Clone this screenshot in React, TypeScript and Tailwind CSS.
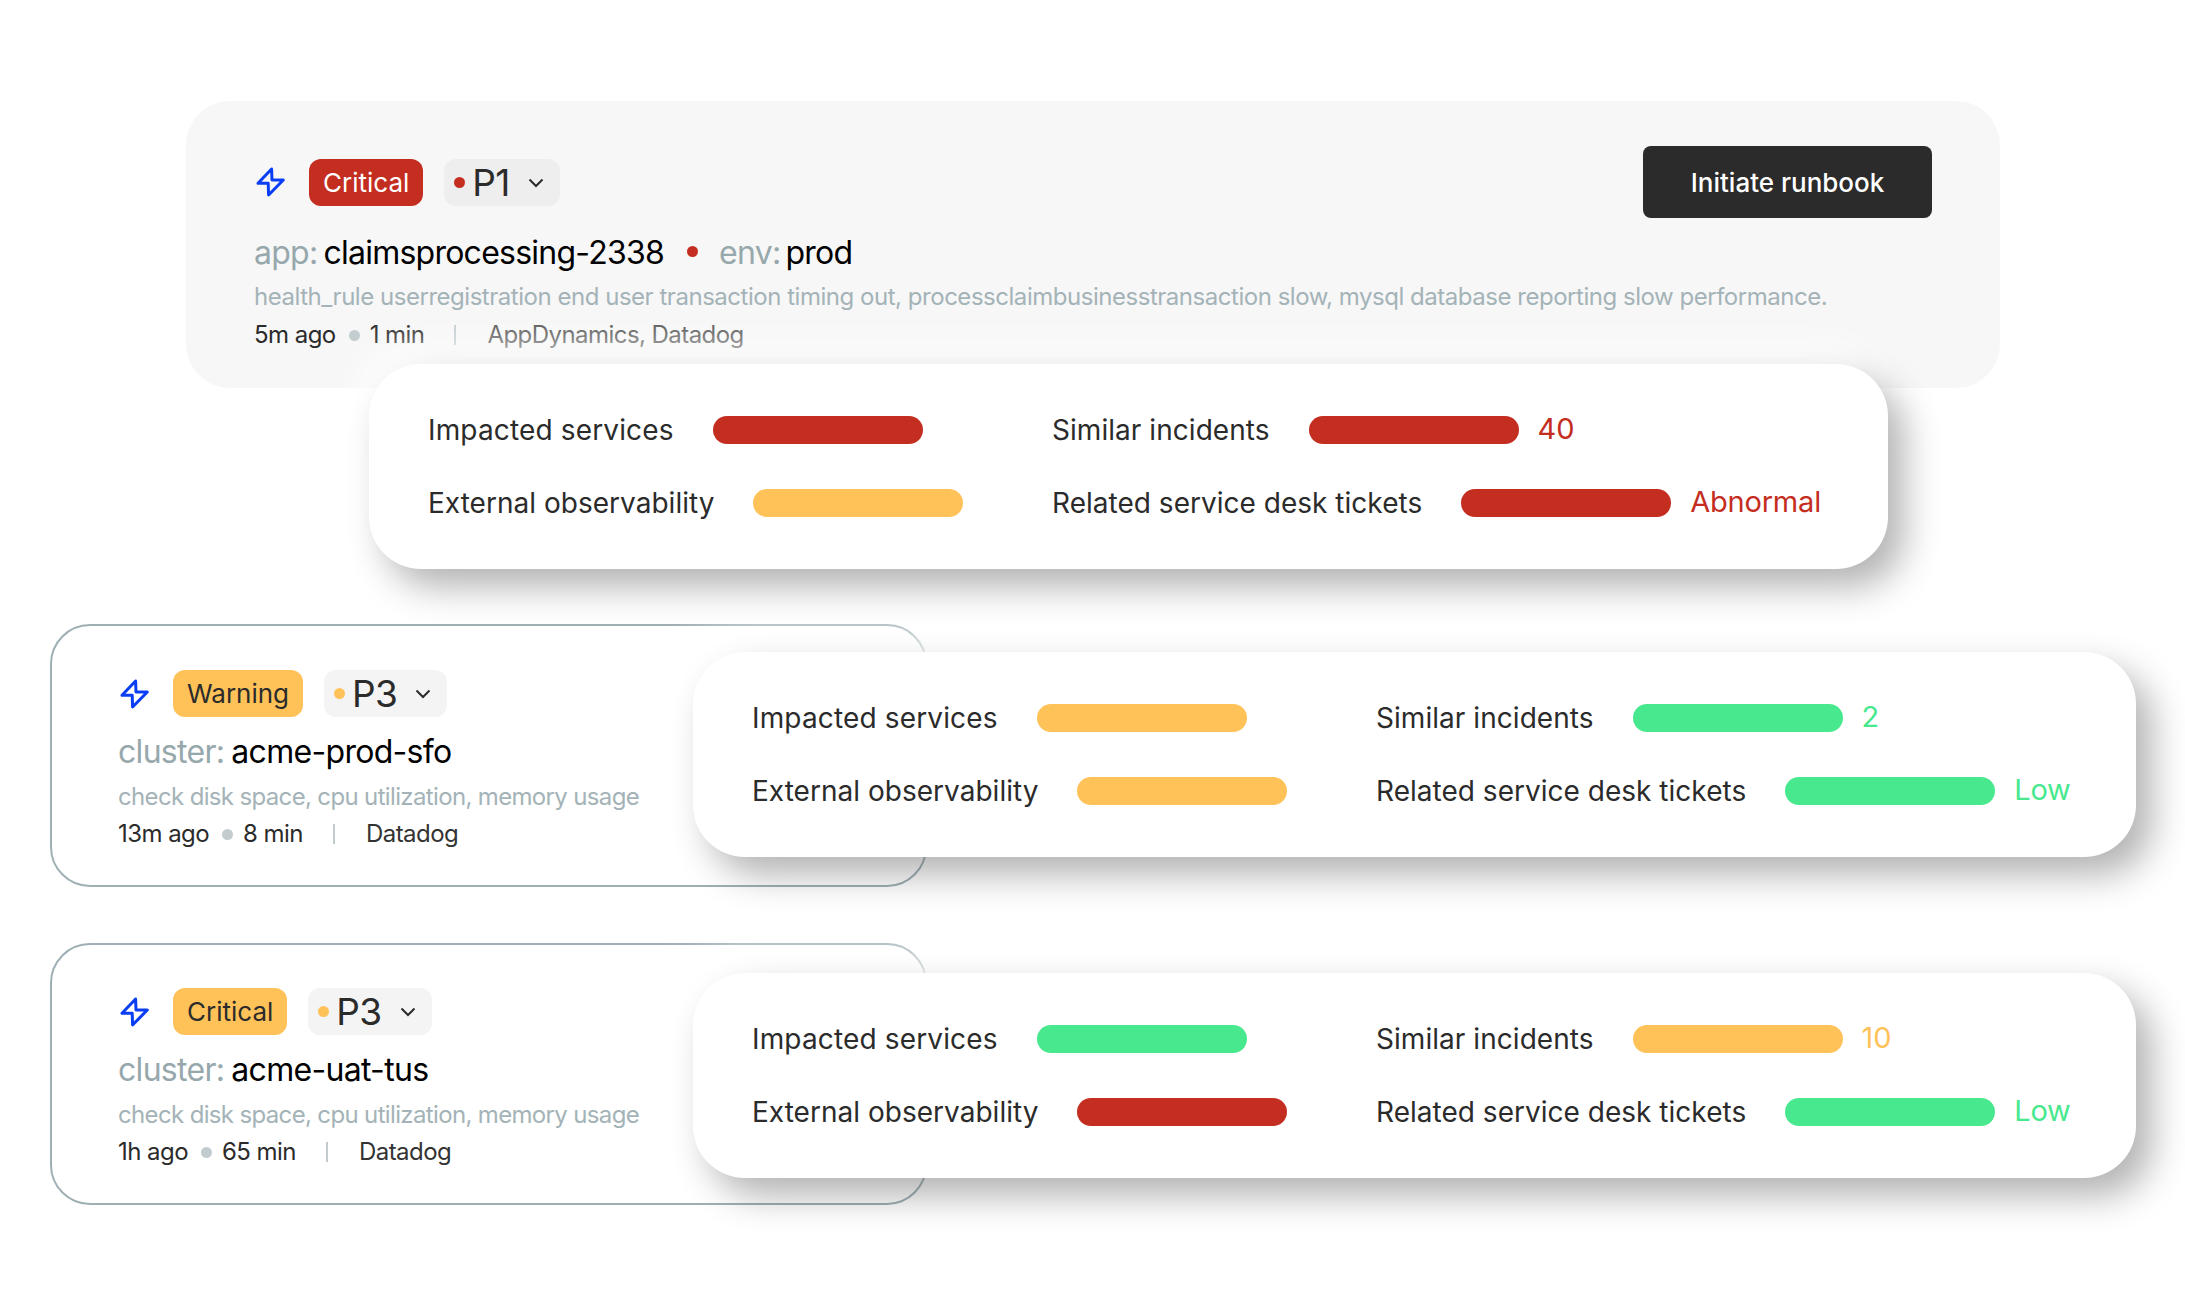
const RED = "bg-[#c42e21]";
const AMBER = "bg-[#ffc259]";
const GREEN = "bg-[#48e88e]";

function Bolt({ cls }: { cls: string }) {
  return (
    <svg viewBox="0 0 32 32" className={cls} fill="none" stroke="#0a3ef5" strokeWidth="3" strokeLinejoin="round">
      <path d="M17.6 3 4 17.3H14.2L14.6 29 29.3 14H18Z" />
    </svg>
  );
}

function Chevron({ cls }: { cls: string }) {
  return (
    <svg viewBox="0 0 16 10" className={cls} fill="none" stroke="#2b2b2b" strokeWidth="2">
      <path d="M1.5 1.5 8 8l6.5-6.5" />
    </svg>
  );
}

function Bar({ color }: { color: string }) {
  return <div className={`h-[28px] w-[210px] shrink-0 rounded-full ${color}`} />;
}

function Stat({
  label,
  labelCls,
  color,
  extra,
  extraColor,
}: {
  label: string;
  labelCls: string;
  color: string;
  extra?: string;
  extraColor?: string;
}) {
  return (
    <div className="flex h-[28px] items-center gap-[39px] whitespace-nowrap">
      <span className={`text-[28px] text-[#2b2b2b] ${labelCls}`}>{label}</span>
      <div className="flex items-center gap-[19px]">
        <Bar color={color} />
        {extra && <span className={`-mt-[2px] text-[29px] tracking-[-0.2px] ${extraColor}`}>{extra}</span>}
      </div>
    </div>
  );
}

function Panel({
  cls,
  a,
  b,
  c,
  d,
  extra1,
  extra2,
  extraColor,
  extra1Color,
}: {
  cls: string;
  a: string;
  b: string;
  c: string;
  d: string;
  extra1: string;
  extra2: string;
  extraColor: string;
  extra1Color: string;
}) {
  return (
    <div
      className={`relative z-10 grid h-[205px] grid-cols-[624px_auto] content-start gap-y-[45px] rounded-[52px] bg-white pl-[59px] pr-[60px] pt-[52px] shadow-[16px_18px_36px_rgba(0,0,0,0.3),-10px_-16px_40px_rgba(255,255,255,0.9)] ${cls}`}
    >
      <Stat label="Impacted services" labelCls="tracking-[0.15px]" color={a} />
      <Stat label="Similar incidents" labelCls="tracking-[0.05px]" color={b} extra={extra1} extraColor={extra1Color} />
      <Stat label="External observability" labelCls="tracking-[0.02px]" color={c} />
      <Stat label="Related service desk tickets" labelCls="tracking-[0.02px]" color={d} extra={extra2} extraColor={extraColor} />
    </div>
  );
}

function Header({
  badge,
  badgeCls,
  dot,
  pri,
  tileCls,
}: {
  badge: string;
  badgeCls: string;
  dot: string;
  pri: string;
  tileCls: string;
}) {
  return (
    <div className="flex items-center">
      <Bolt cls="mr-[23px] h-[32px] w-[32px]" />
      <span className={`flex h-[47px] items-center rounded-[12px] px-[14px] text-[26px] ${badgeCls}`}>{badge}</span>
      <span className={`ml-[21px] flex h-[47px] items-center rounded-[12px] pl-[10px] pr-[16px] ${tileCls}`}>
        <span className={`h-[11px] w-[11px] rounded-full ${dot}`} />
        <span className="ml-[7px] text-[37px] leading-none tracking-[-0.6px] text-[#2b2b2b]">{pri}</span>
        <Chevron cls="ml-[18px] mt-[1px] h-[10px] w-[16px]" />
      </span>
    </div>
  );
}

function Meta({ ago, dur, src, srcCls }: { ago: string; dur: string; src: string; srcCls: string }) {
  return (
    <div className="flex items-center whitespace-nowrap text-[24px] leading-[30px] tracking-[-0.55px] text-[#2b2b2b]">
      <span>{ago}</span>
      <span className="ml-[13px] mr-[10px] h-[11px] w-[11px] rounded-full bg-[#c2cccf]" />
      <span className="mr-[30px]">{dur}</span>
      <span className="h-[20px] w-[2px] bg-[#c2cccf]" />
      <span className={`ml-[31px] ${srcCls}`}>{src}</span>
    </div>
  );
}

function SmallCard({
  cluster,
  badge,
  ago,
  dur,
  cls,
}: {
  cluster: string;
  badge: string;
  ago: string;
  dur: string;
  cls: string;
}) {
  return (
    <div className={`w-[877px] shrink-0 rounded-[40px] border-2 border-[#9fb0b5] bg-white pl-[66px] ${cls}`}>
      <Header badge={badge} badgeCls="bg-[#ffc259] text-[#2b2b2b]" dot="bg-[#ffc259]" pri="P3" tileCls="bg-[#f4f4f4]" />
      <div className="mt-[15px] flex whitespace-nowrap text-[32px] leading-[40px] tracking-[-0.7px] text-black">
        <span className="mr-[7px] text-[#97a8ac]">cluster:</span>
        {cluster}
      </div>
      <div className="mt-[10px] whitespace-nowrap text-[24px] leading-[30px] tracking-[-0.65px] text-[#a4b3b7]">
        check disk space, cpu utilization, memory usage
      </div>
      <div className="mt-[7px]">
        <Meta ago={ago} dur={dur} src="Datadog" srcCls="text-[#333333]" />
      </div>
    </div>
  );
}

export default function App() {
  return (
    <div className="h-[1301px] w-[2185px] overflow-hidden bg-white font-['Inter',sans-serif] pt-[101px]">
      <div className="ml-[186px]">
        <div className="h-[287px] w-[1814px] rounded-[44px] bg-[#f7f7f7] pl-[68px] pr-[68px] pt-[45px]">
          <div className="flex items-center justify-between">
            <Header badge="Critical" badgeCls="bg-[#c42e21] text-white" dot="bg-[#c42e21]" pri="P1" tileCls="bg-[#eeeeee]" />
            <button className="h-[72px] w-[289px] rounded-[8px] bg-[#2b2b2b] text-[26px] font-medium text-white">
              Initiate runbook
            </button>
          </div>
          <div className="mt-[15px] flex items-center whitespace-nowrap text-[32px] leading-[40px] tracking-[-0.75px] text-black">
            <span className="mr-[6px] text-[#97a8ac]">app:</span>
            claimsprocessing-2338
            <span className="-mt-[4px] ml-[23px] mr-[21px] h-[11px] w-[11px] rounded-full bg-[#c42e21]" />
            <span className="mr-[5px] text-[#97a8ac]">env:</span>
            prod
          </div>
          <div className="mt-[9px] whitespace-nowrap text-[24px] leading-[30px] tracking-[-0.47px] text-[#a4b3b7]">
            health_rule userregistration end user transaction timing out, processclaimbusinesstransaction slow, mysql database reporting slow performance.
          </div>
          <div className="mt-[8px]">
            <Meta ago="5m ago" dur="1 min" src="AppDynamics, Datadog" srcCls="text-[#555555]" />
          </div>
        </div>
        <Panel
          cls="-mt-[24px] ml-[183px] w-[1519px]"
          a={RED}
          b={RED}
          c={AMBER}
          d={RED}
          extra1="40"
          extra2="Abnormal"
          extra1Color="text-[#c42e21]"
          extraColor="text-[#c42e21]"
        />
      </div>
      <div className="ml-[50px] mt-[55px] flex items-start">
        <SmallCard cluster="acme-prod-sfo" badge="Warning" ago="13m ago" dur="8 min" cls="h-[263px] pt-[44px]" />
        <Panel
          cls="-ml-[234px] mt-[28px] w-[1443px]"
          a={AMBER}
          b={GREEN}
          c={AMBER}
          d={GREEN}
          extra1="2"
          extra2="Low"
          extra1Color="text-[#48e88e]"
          extraColor="text-[#48e88e]"
        />
      </div>
      <div className="ml-[50px] mt-[56px] flex items-start">
        <SmallCard cluster="acme-uat-tus" badge="Critical" ago="1h ago" dur="65 min" cls="h-[262px] pt-[43px]" />
        <Panel
          cls="-ml-[234px] mt-[30px] w-[1443px]"
          a={GREEN}
          b={AMBER}
          c={RED}
          d={GREEN}
          extra1="10"
          extra2="Low"
          extra1Color="text-[#ffc259]"
          extraColor="text-[#48e88e]"
        />
      </div>
    </div>
  );
}
